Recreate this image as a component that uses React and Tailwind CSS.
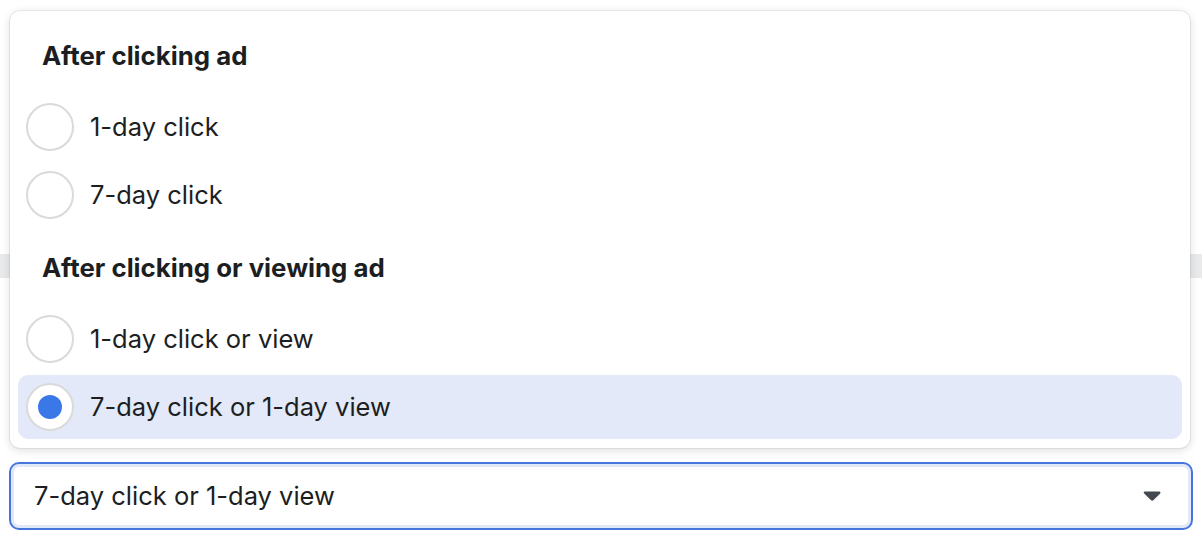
import React, { useState } from "react";

const groups = [
  {
    title: "After clicking ad",
    options: ["1-day click", "7-day click"],
  },
  {
    title: "After clicking or viewing ad",
    options: ["1-day click or view", "7-day click or 1-day view"],
  },
];

function Radio({ checked }) {
  return (
    <div className="flex h-[48px] w-[48px] shrink-0 items-center justify-center rounded-full border-2 border-[#dadada] bg-white">
      {checked && <div className="h-[24px] w-[24px] rounded-full bg-[#3a78e8]" />}
    </div>
  );
}

function Caret() {
  return (
    <svg width="18" height="10" viewBox="0 0 18 10" className="shrink-0">
      <path
        d="M1.6 0.6h14.8a1.1 1.1 0 0 1 0.8 1.8l-6.6 6.7a2 2 0 0 1-2.8 0L1.2 2.4a1.1 1.1 0 0 1 0.4-1.8z"
        fill="#444950"
      />
    </svg>
  );
}

export default function App() {
  const [value, setValue] = useState("7-day click or 1-day view");

  return (
    <div className="relative h-[548px] w-full overflow-hidden bg-white font-['Inter',sans-serif] text-[#1c1e21]">
      {/* page behind the menu */}
      <div className="mt-[254px] h-[24px] bg-[#e9eaec]" />

      <div className="mx-[9px] mt-[184px] flex h-[68px] items-center justify-between rounded-[10px] border-2 border-[#4676dc] bg-white pl-[23px] pr-[30px] shadow-[inset_0_0_0_3px_#e1e8f7]">
        <span className="text-[25.5px] leading-none">{value}</span>
        <Caret />
      </div>

      <div className="mt-[19px] pl-[40px] text-[20px] leading-[24px] text-[#c4c6ca]">
        Conversions that happened within 7 days of clicking or 1 day of viewing your ad
      </div>

      {/* dropdown menu */}
      <div className="absolute left-[10px] top-[11px] w-[1180px] h-[437px] rounded-[10px] bg-white px-[8px] shadow-[0_0_0_1px_rgba(0,0,0,0.06),0_2px_10px_rgba(0,0,0,0.14)]">
        {groups.map((g, gi) => (
          <div key={g.title} className={gi === 0 ? "pt-[31px]" : "pt-[27px]"}>
            <div className="pl-[24px] text-[25.8px] font-bold leading-[28px]">{g.title}</div>
            <div className="mt-[25px] flex flex-col gap-[4px]">
              {g.options.map((opt) => {
                const checked = opt === value;
                return (
                  <button
                    key={opt}
                    onClick={() => setValue(opt)}
                    className={
                      "flex h-[64px] items-center gap-[16px] rounded-[10px] pl-[8px] text-left " +
                      (checked ? "bg-[#e3e9f8]" : "bg-white")
                    }
                  >
                    <Radio checked={checked} />
                    <span className="text-[25.5px] leading-none">{opt}</span>
                  </button>
                );
              })}
            </div>
          </div>
        ))}
      </div>
    </div>
  );
}
